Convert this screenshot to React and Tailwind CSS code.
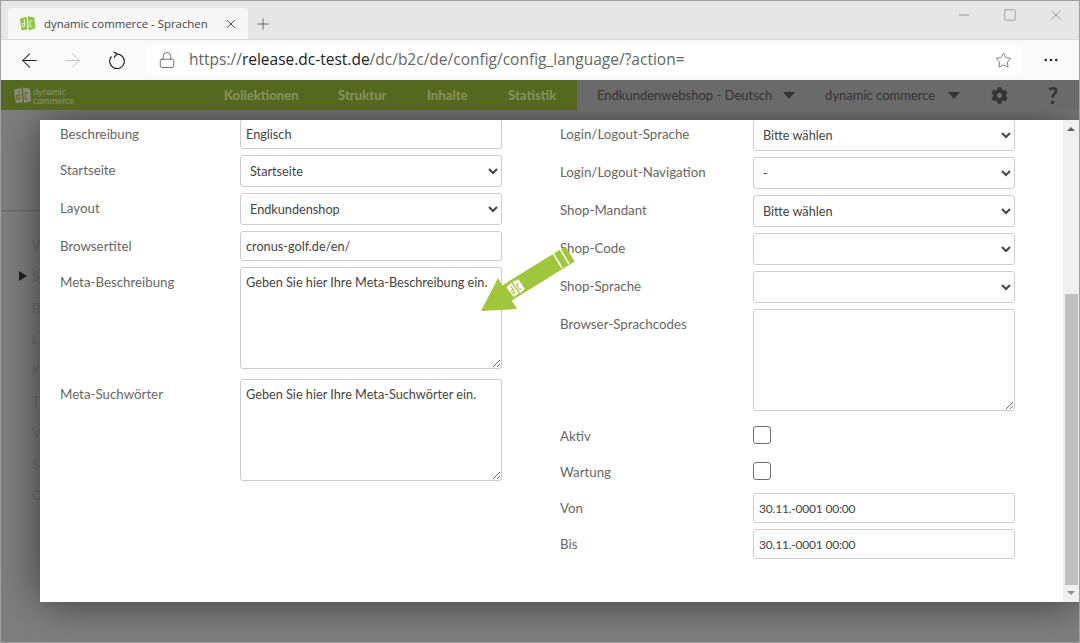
import React from 'react';
import { ArrowLeft, ArrowRight, Lock, Star, Plus, X, Minus, Square, MoreHorizontal } from 'lucide-react';
import { FaCog } from 'react-icons/fa';

const LEFT = [
  { label: 'Beschreibung', type: 'input', value: 'Englisch' },
  { label: 'Startseite', type: 'select', value: 'Startseite' },
  { label: 'Layout', type: 'select', value: 'Endkundenshop' },
  { label: 'Browsertitel', type: 'input', value: 'cronus-golf.de/en/' },
  { label: 'Meta-Beschreibung', type: 'textarea', value: 'Geben Sie hier Ihre Meta-Beschreibung ein.' },
  { label: 'Meta-Suchwörter', type: 'textarea', value: 'Geben Sie hier Ihre Meta-Suchwörter ein.' },
];

const RIGHT = [
  { label: 'Login/Logout-Sprache', type: 'select', value: 'Bitte wählen' },
  { label: 'Login/Logout-Navigation', type: 'select', value: '-' },
  { label: 'Shop-Mandant', type: 'select', value: 'Bitte wählen' },
  { label: 'Shop-Code', type: 'select', value: '' },
  { label: 'Shop-Sprache', type: 'select', value: '' },
  { label: 'Browser-Sprachcodes', type: 'textarea', value: '' },
  { label: 'Aktiv', type: 'check' },
  { label: 'Wartung', type: 'check' },
  { label: 'Von', type: 'date', value: '30.11.-0001 00:00' },
  { label: 'Bis', type: 'date', value: '30.11.-0001 00:00' },
];

const SIDE = ['W', 'S', 'B', 'L', 'K', 'T', 'V', 'S', 'O'];

function Logo({ className, color, cut }) {
  return (
    <svg viewBox="0 0 20 20" className={className}>
      <path d="M1 4L9 2L10 17L3 18Z" fill={color} />
      <path d="M10.5 1.5L18 3L19 16L11.5 18Z" fill={color} />
      <path d="M6.5 5V14H4V10H6.5M16 7H13V14H16" fill="none" stroke={cut} strokeWidth="1.1" />
    </svg>
  );
}

function Field({ item }) {
  const base = 'w-[262px] border border-[#cccccc] rounded-[3px] bg-white text-[12.7px] text-[#444444] outline-none';
  if (item.type === 'select') {
    return (
      <select defaultValue={item.value} className={`${base} h-[32px] pl-[5px] pr-[6px]`}>
        <option value={item.value}>{item.value}</option>
      </select>
    );
  }
  if (item.type === 'textarea') {
    return <textarea defaultValue={item.value} className={`${base} h-[102px] px-[5px] py-[4px] block leading-[20px]`} />;
  }
  if (item.type === 'check') {
    return <span className="block w-[18px] h-[18px] mt-[5px] mb-[7px] border border-[#6e6e6e] rounded-[3px] bg-white" />;
  }
  if (item.type === 'date') {
    return <input defaultValue={item.value} className="w-[262px] h-[30px] px-[5px] block border border-[#cccccc] rounded-[3px] bg-white text-[12px] tracking-[-0.2px] text-[#444444] outline-none" />;
  }
  return <input defaultValue={item.value} className={`${base} h-[30px] px-[5px] block`} />;
}

function FormRow({ item, labelClass }) {
  return (
    <div className={`flex items-start ${item.type === 'textarea' ? 'mb-[10px]' : 'mb-[6px]'}`}>
      <label className={`${labelClass} shrink-0 text-[13.3px] leading-[20px] text-[#666666] pt-[5px]`}>{item.label}</label>
      <Field item={item} />
    </div>
  );
}

export default function App() {
  return (
    <div className="w-[1080px] h-[643px] flex flex-col overflow-hidden bg-[#7f7f7f] font-['Lato','Noto_Sans',sans-serif] border border-[#a0a0a0]">
      {/* tab strip */}
      <div className="h-[39px] shrink-0 flex items-end bg-[#e6e6e6] border-b border-[#d8d8d8] pl-[7px] font-['Open_Sans',sans-serif]">
        <div className="w-[240px] h-[31px] flex items-center bg-[#f7f7f7] rounded-t-[4px] pl-[11px] pr-[10px]">
          <Logo className="w-[17px] h-[17px]" color="#8cc63f" cut="#e8f3d0" />
          <span className="ml-[8px] flex-1 text-[11.4px] text-[#444444] whitespace-nowrap">dynamic commerce - Sprachen</span>
          <X size={14} className="text-[#333333]" strokeWidth={1.5} />
        </div>
        <Plus size={18} strokeWidth={1} className="ml-[6px] mb-[6px] text-[#444444]" />
        <div className="flex-1" />
        <div className="flex self-start pt-[6px] pr-[15px] gap-[31px] text-[#777777]">
          <Minus size={16} strokeWidth={1} />
          <Square size={14} strokeWidth={1} className="mt-[1px]" />
          <X size={16} strokeWidth={1} />
        </div>
      </div>
      {/* toolbar */}
      <div className="h-[40px] shrink-0 flex items-center bg-[#f9f9f9] pl-[17px]">
        <ArrowLeft size={23} strokeWidth={1.1} className="text-[#222222]" />
        <ArrowRight size={23} strokeWidth={0.9} className="ml-[20px] text-[#bbbbbb]" />
        <svg viewBox="0 0 18 18" className="ml-[24px] w-[18px] h-[18px] text-[#222222]" fill="none" stroke="currentColor" strokeWidth="1.2">
          <path d="M9 3A7.3 7.3 0 1 1 3.5 5.5" />
          <path d="M5.5 .8L9 3L6 6.5" />
        </svg>
        <div className="ml-[19px] w-[878px] h-[30px] flex items-center bg-white rounded-[4px] pl-[13px] pr-[11px]">
          <Lock size={18} strokeWidth={1} className="text-[#444444]" />
          <span className="ml-[13px] flex-1 text-[15.5px] text-[#666666] font-['Open_Sans',sans-serif] whitespace-nowrap">
            https://<span className="text-[#222222]">release.dc-test.de</span>/dc/b2c/de/config/config_language/?action=
          </span>
          <Star size={17} strokeWidth={1} className="text-[#444444]" />
        </div>
        <MoreHorizontal size={18} strokeWidth={1.5} className="ml-[19px] text-[#222222]" />
      </div>
      {/* site nav */}
      <div className="h-[30px] shrink-0 flex relative z-10 text-[13.2px] font-bold">
        <div className="w-[576px] flex items-center bg-[#55681f] pl-[12px] pt-[1px]">
          <Logo className="w-[19px] h-[19px]" color="#8c8c7c" cut="#55681f" />
          <span className="ml-[1px] w-[37px] text-[9px] leading-[9px] font-normal text-[#8a9470]">dynamic<br />commerce</span>
          <span className="ml-[154px] w-[75px] text-[#87945f]">Kollektionen</span>
          <span className="ml-[39px] w-[49px] text-[#87945f]">Struktur</span>
          <span className="ml-[40px] w-[41px] text-[#87945f]">Inhalte</span>
          <span className="ml-[40px] w-[48px] text-[#87945f]">Statistik</span>
        </div>
        <div className="flex-1 flex items-center bg-[#6a6a6a] pl-[20px] pt-[1px] text-[#333333] text-[13px] font-normal">
          <span className="w-[178px] whitespace-nowrap">Endkundenwebshop - Deutsch</span>
          <span className="ml-[8px] border-x-[6px] border-x-transparent border-t-[7px] border-t-[#333333]" />
          <span className="ml-[30px] w-[115px] whitespace-nowrap">dynamic commerce</span>
          <span className="ml-[8px] border-x-[6px] border-x-transparent border-t-[7px] border-t-[#333333]" />
          <FaCog size={17} className="ml-[31px] text-[#333333]" />
          <span className="ml-[40px] text-[22px] leading-[22px] font-bold">?</span>
        </div>
      </div>
      {/* page under dialog */}
      <div className="flex-1 relative overflow-hidden">
        <div className="pt-[125px] pl-[31px] text-[13.3px] text-[#6e6e6e]">
          <div className="absolute left-0 top-[100px] w-[39px] border-t border-[#666666]" />
          {SIDE.map((s, i) => (
            <div key={i} className="h-[31.25px] leading-[20px] relative">
              {i === 1 && <span className="absolute left-[-13px] top-[5px] border-y-[5px] border-y-transparent border-l-[8px] border-l-[#222222]" />}
              {s}
            </div>
          ))}
        </div>
        {/* dialog */}
        <div className="absolute left-[39px] top-[10px] w-[1039px] h-[482px] flex bg-white shadow-[0_0_40px_rgba(0,0,0,0.55)] overflow-hidden">
          <div className="flex-1 overflow-hidden flex pl-[20px]">
            <div className="w-[500px] -mt-[1px]">
              {LEFT.map((item) => (
                <FormRow key={item.label} item={item} labelClass="w-[180px]" />
              ))}
            </div>
            <div className="w-[480px] -mt-[1px]">
              {RIGHT.map((item) => (
                <FormRow key={item.label} item={item} labelClass="w-[193px]" />
              ))}
            </div>
          </div>
          {/* scrollbar */}
          <div className="w-[16px] shrink-0 flex flex-col items-center bg-[#f0f0f0]">
            <span className="mt-[7px] border-x-[4px] border-x-transparent border-b-[4px] border-b-[#606060]" />
            <div className="mt-[163px] w-[13px] h-[291px] bg-[#c0c0c0]" />
            <span className="mt-[6px] border-x-[4px] border-x-transparent border-t-[4px] border-t-[#909090]" />
          </div>
        </div>
        {/* arrow */}
        <svg className="absolute left-[469px] top-[120px] w-[120px] h-[90px]" viewBox="470 230 120 90">
          <path d="M481 311L498 278L502.3 285.4L565.3 246.4L574.7 261.6L511.7 300.6L517 309Z" fill="#a0c73c" />
          <path d="M553 253L562 268M560 249L569 264" stroke="#fff" strokeWidth="1.5" />
          <g transform="translate(504,285) rotate(-30) scale(0.85)">
            <path d="M1 4L9 2L10 17L3 18Z" fill="#fff" />
            <path d="M10.5 1.5L18 3L19 16L11.5 18Z" fill="#fff" />
            <path d="M6.5 5V14H4V10H6.5M16 7H13V14H16" fill="none" stroke="#a0c73c" strokeWidth="1.2" />
          </g>
        </svg>
      </div>
    </div>
  );
}
